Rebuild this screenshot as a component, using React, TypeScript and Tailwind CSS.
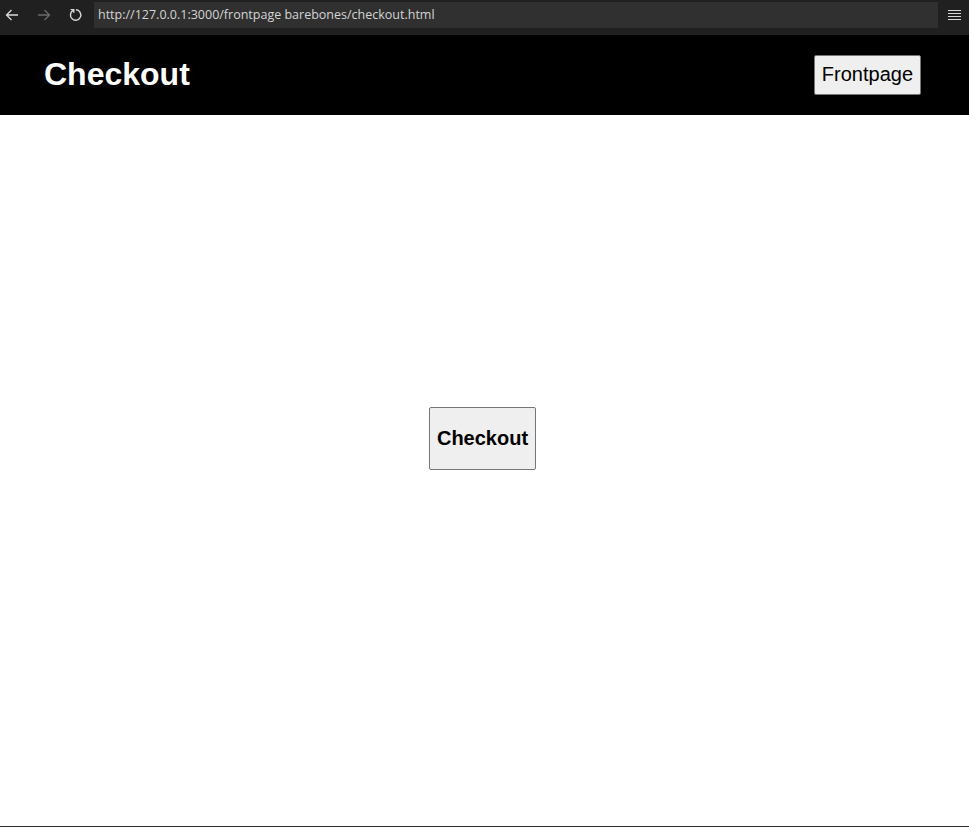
import React from "react";

export default function App() {
  return (
    <div className="flex h-[827px] w-[969px] flex-col bg-white" style={{ fontFamily: '"Liberation Sans", Arial, sans-serif' }}>
      {/* browser chrome */}
      <div className="flex h-[35px] items-start bg-[#202020] pt-[2px]">
        <div className="flex h-[26px] items-center">
          <svg width="14" height="12" viewBox="0 0 14 12" className="ml-[5px]">
            <path d="M13 6H1.5M6.5 1L1.5 6l5 5" fill="none" stroke="#d8d8d8" strokeWidth="1.3" />
          </svg>
          <svg width="14" height="12" viewBox="0 0 14 12" className="ml-[18px]">
            <path d="M1 6h11.5M7.5 1l5 5-5 5" fill="none" stroke="#6a6a6a" strokeWidth="1.3" />
          </svg>
          <svg width="14" height="14" viewBox="0 0 14 14" className="ml-[18px]">
            <path d="M4.2 2.4A5.2 5.2 0 1 0 7 1.8" fill="none" stroke="#d8d8d8" strokeWidth="1.4" />
            <path d="M1.6 1.6h3.2v3.2" fill="none" stroke="#d8d8d8" strokeWidth="1.4" />
          </svg>
        </div>
        <div
          className="ml-[11px] flex h-[26px] w-[844px] items-center bg-[#303030] pl-[4px] text-[12.5px] text-[#d4d4d4]"
          style={{ fontFamily: '"Open Sans", "Noto Sans", sans-serif' }}
        >
          http://127.0.0.1:3000/frontpage barebones/checkout.html
        </div>
        <div className="ml-[10px] flex h-[26px] flex-col justify-center gap-[2px]">
          <div className="h-[1px] w-[13px] bg-[#d8d8d8]" />
          <div className="h-[1px] w-[13px] bg-[#d8d8d8]" />
          <div className="h-[1px] w-[13px] bg-[#d8d8d8]" />
          <div className="h-[1px] w-[13px] bg-[#d8d8d8]" />
        </div>
      </div>

      {/* header */}
      <header className="flex h-[80px] items-center justify-between bg-black pl-[44px] pr-[48px]">
        <h1 className="mb-[3px] text-[32px] font-bold leading-none text-white">Checkout</h1>
        <button className="h-[40px] rounded-[2px] border border-[#767676] bg-[#efefef] px-[7px] pb-[2px] text-[20px] text-black">
          Frontpage
        </button>
      </header>

      {/* main */}
      <main className="flex flex-1 justify-center pt-[292px] pr-[4px]">
        <button className="h-[63px] rounded-[2px] border border-[#767676] bg-[#efefef] px-[7px] pb-[2px] text-[20px] font-bold text-black">
          Checkout
        </button>
      </main>
      <div className="h-[1px] bg-[#2b2b2b]" />
    </div>
  );
}
